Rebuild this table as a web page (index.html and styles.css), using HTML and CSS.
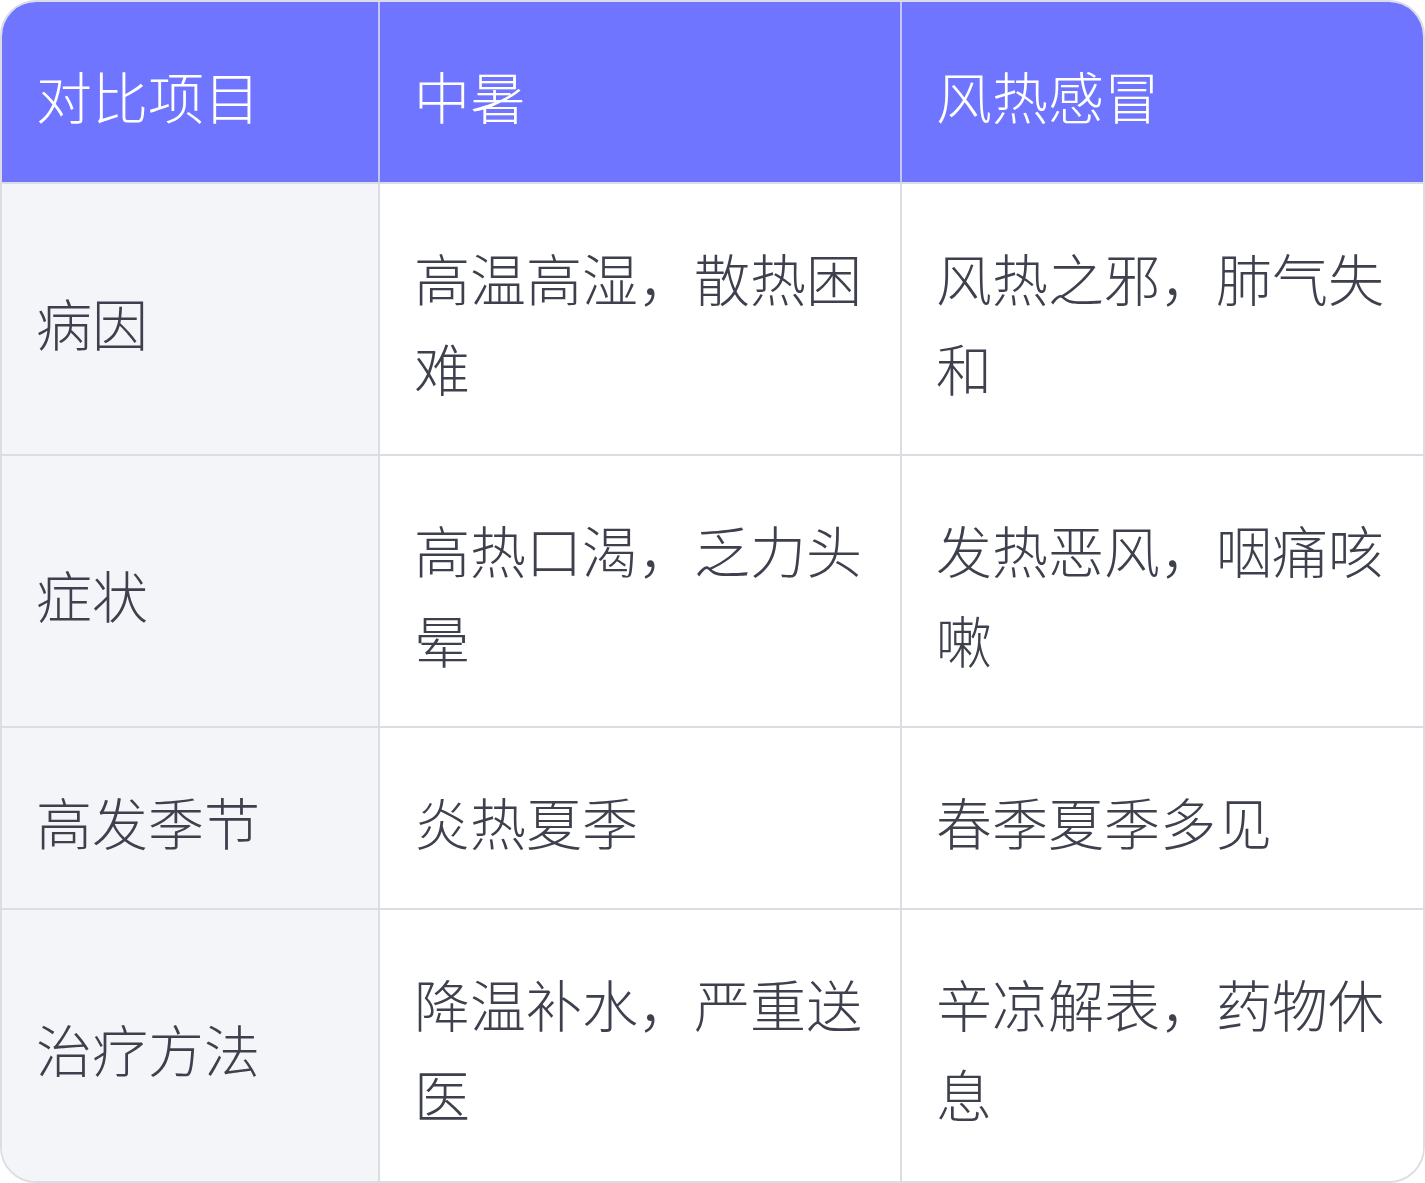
FILE: index.html
```html
<!DOCTYPE html>
<html lang="zh-CN">
<head>
<meta charset="utf-8">
<title>中暑与风热感冒对比</title>
<link rel="stylesheet" href="styles.css">
</head>
<body>
<div class="table">
  <div class="cell head">对比项目</div>
  <div class="cell head">中暑</div>
  <div class="cell head last-col">风热感冒</div>

  <div class="cell label">病因</div>
  <div class="cell">高温高湿，散热困难</div>
  <div class="cell last-col">风热之邪，肺气失和</div>

  <div class="cell label">症状</div>
  <div class="cell">高热口渴，乏力头晕</div>
  <div class="cell last-col">发热恶风，咽痛咳嗽</div>

  <div class="cell label">高发季节</div>
  <div class="cell">炎热夏季</div>
  <div class="cell last-col">春季夏季多见</div>

  <div class="cell label last-row">治疗方法</div>
  <div class="cell last-row">降温补水，严重送医</div>
  <div class="cell last-row last-col">辛凉解表，药物休息</div>
</div>
</body>
</html>
```

FILE: styles.css
```css
html, body {
  margin: 0;
  padding: 0;
  background: #ffffff;
}

.table {
  box-sizing: border-box;
  width: 1425px;
  display: grid;
  grid-template-columns: 378px 522px 521px;
  border: 2px solid #dcdde3;
  border-radius: 36px;
  overflow: hidden;
  font-family: "Noto Sans CJK SC", "Noto Sans", sans-serif;
  font-weight: 300;
  font-size: 56px;
  line-height: 90px;
  color: #3e414d;
}

.cell {
  box-sizing: border-box;
  padding: 48px 34px 42px;
  background: #ffffff;
  border-right: 2px solid #dcdde3;
  border-bottom: 2px solid #dcdde3;
}

.cell.label {
  display: flex;
  align-items: center;
  background: #f4f5f9;
}

.cell.head {
  background: #6f75ff;
  color: #ffffff;
  border-right-color: #c3c6f7;
  border-bottom-color: #dcdde3;
}

.cell.last-col {
  border-right: none;
}

.cell.last-row {
  border-bottom: none;
  padding-bottom: 43px;
}
```
